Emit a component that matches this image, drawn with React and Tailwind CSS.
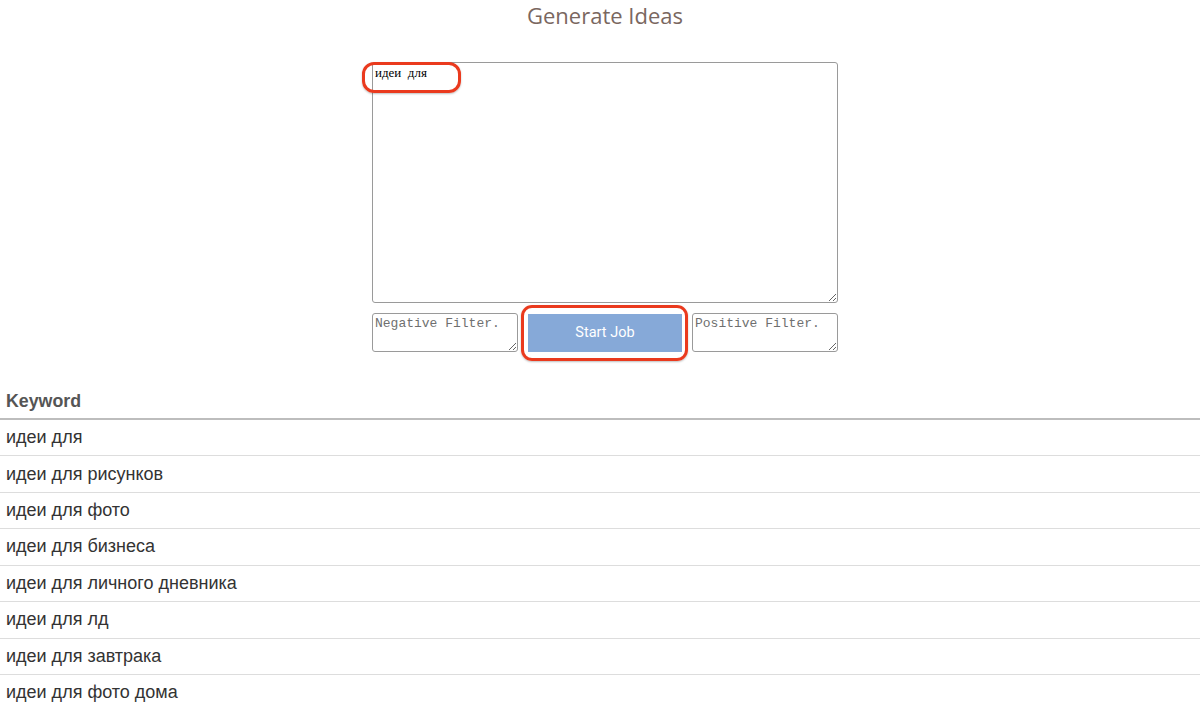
import React from 'react';

const keywords = [
    'идеи для',
    'идеи для рисунков',
    'идеи для фото',
    'идеи для бизнеса',
    'идеи для личного дневника',
    'идеи для лд',
    'идеи для завтрака',
    'идеи для фото дома',
];

const App = () => {
    return (
        <div className="min-h-screen bg-white font-['Liberation_Sans',Arial,sans-serif] overflow-hidden">
            {/* Header */}
            <div className="flex justify-center pl-[10px]">
                <h1 className="h-8 leading-[30px] text-[22px] font-normal text-[#7a675f] font-['Open_Sans',sans-serif]">Generate Ideas</h1>
            </div>

            {/* Form */}
            <div className="flex justify-center pl-[10px] mt-[30px]">
                <div className="relative w-[466px]">
                    <textarea
                        defaultValue="идеи  для"
                        className="block w-full h-[241px] border border-[#9a9a9a] rounded-[3px] p-[2px] text-[13px] leading-[16px] text-black font-['Liberation_Serif',serif] outline-none"
                    />
                    <div className="flex gap-[10px] mt-[10px]">
                        <textarea
                            placeholder="Negative Filter."
                            className="block w-[146px] h-[39px] border border-[#9a9a9a] rounded-[3px] p-[2px] text-[13px] leading-[16px] font-['Liberation_Mono',monospace] placeholder:text-[#6f6f6f] outline-none"
                        />
                        <button className="w-[154px] h-[38px] mt-[1px] bg-[#86a9d8] text-white text-[14.5px] font-['Roboto',sans-serif]">
                            Start Job
                        </button>
                        <textarea
                            placeholder="Positive Filter."
                            className="block w-[146px] h-[39px] border border-[#9a9a9a] rounded-[3px] p-[2px] text-[13px] leading-[16px] font-['Liberation_Mono',monospace] placeholder:text-[#6f6f6f] outline-none"
                        />
                    </div>

                    {/* Annotation highlights */}
                    <div className="absolute left-[-10px] top-0 w-[99px] h-[31px] border-[3px] border-[#ea3a1e] rounded-[12px] shadow-[0_1px_2px_rgba(0,0,0,0.25)] pointer-events-none" />
                    <div className="absolute left-[149px] top-[243px] w-[167px] h-[56px] border-[3px] border-[#ea3a1e] rounded-[11px] shadow-[0_1px_2px_rgba(0,0,0,0.25)] pointer-events-none" />
                </div>
            </div>

            {/* Results list */}
            <div className="mt-[33px] text-[18px] text-[#333]">
                <div className="h-[35px] border-b-2 border-[#bdbdbd] px-[6px] flex items-center font-bold text-[17.8px] text-[#555]">
                    Keyword
                </div>
                {keywords.map(k => (
                    <div key={k} className="h-[36.43px] border-b border-[#dddddd] px-[6px] flex items-center">
                        {k}
                    </div>
                ))}
            </div>
        </div>
    );
};

export default App;
